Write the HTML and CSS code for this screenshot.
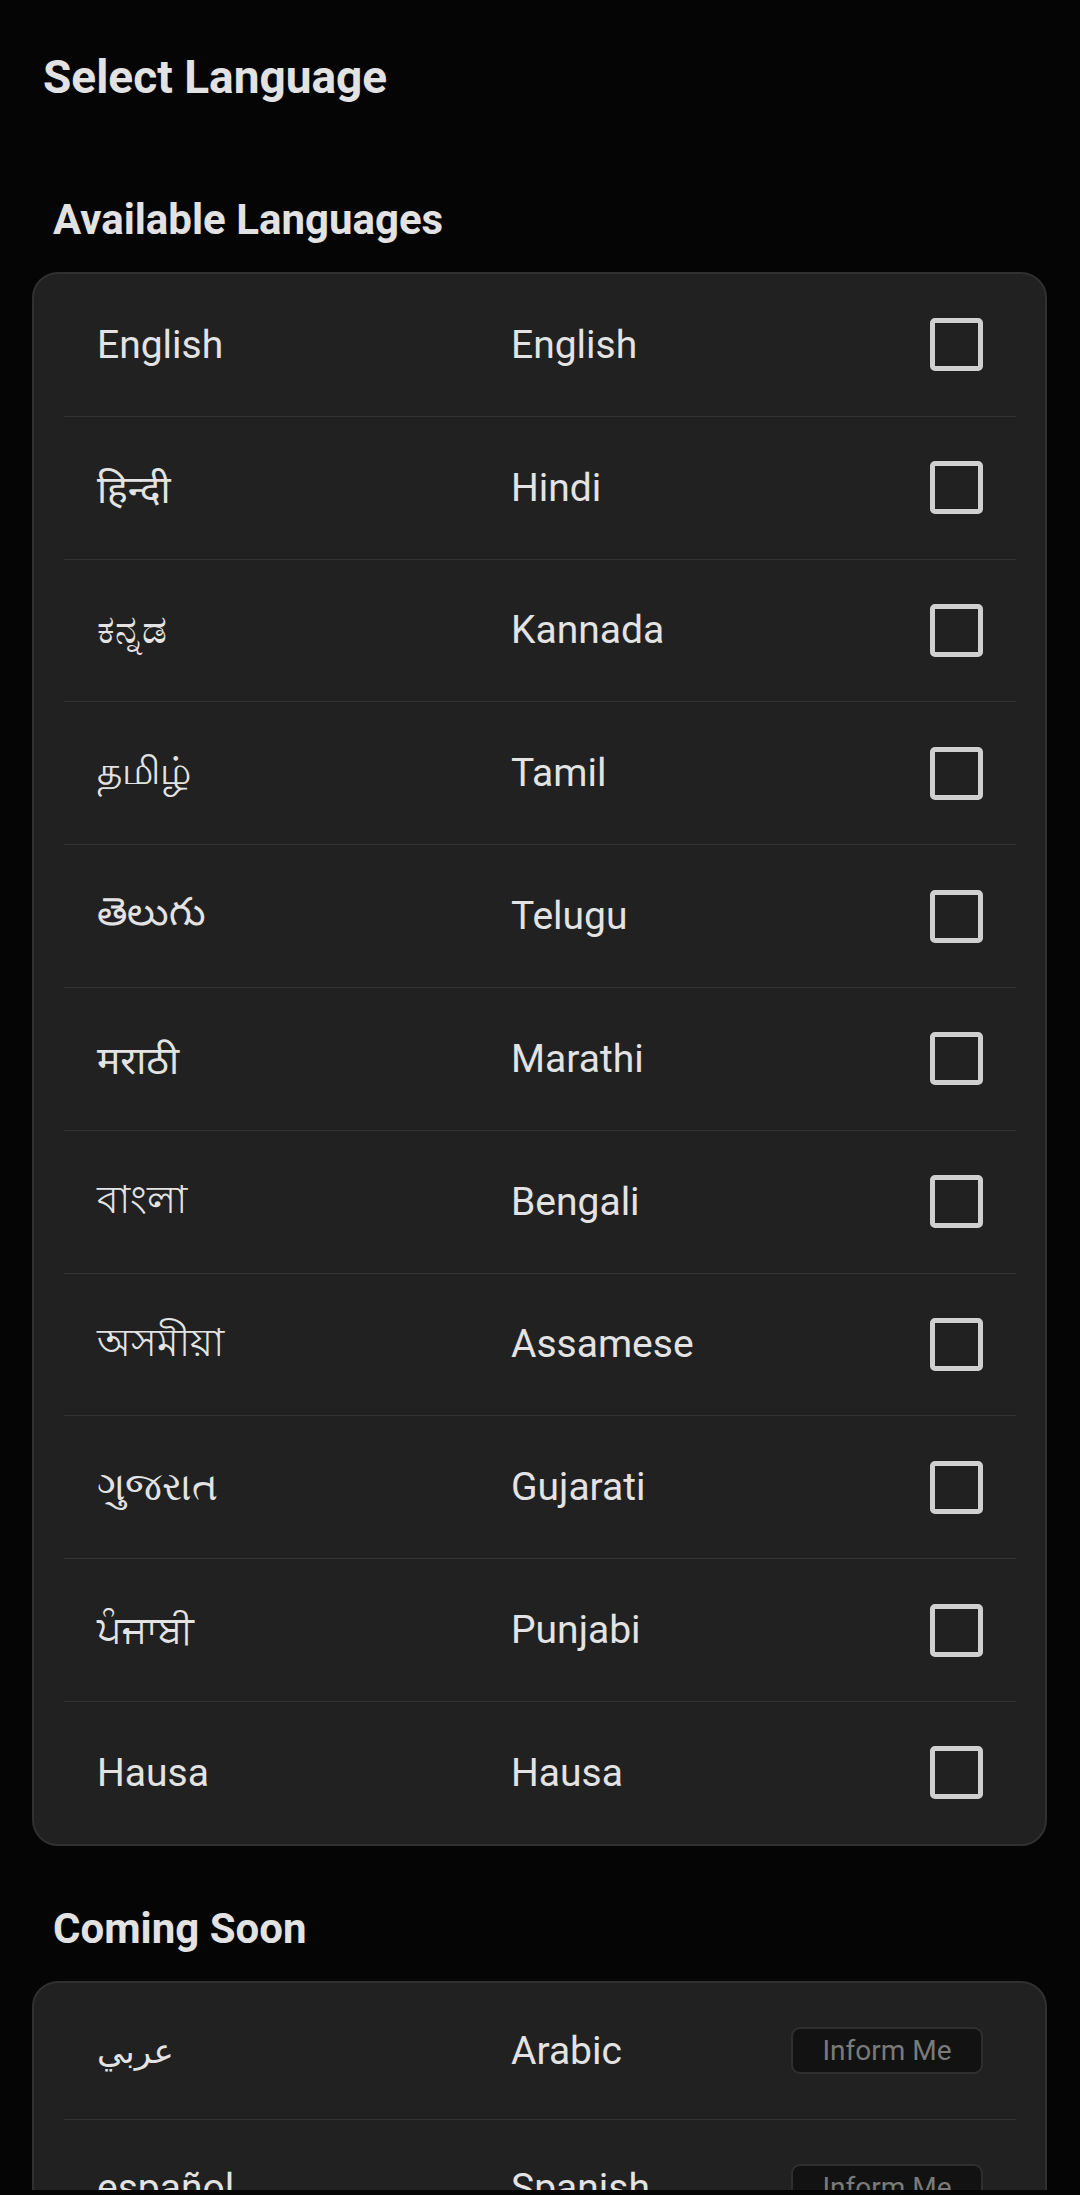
FILE: index.html
```html
<!DOCTYPE html>
<html lang="en">
<head>
    <meta charset="UTF-8">
    <meta name="viewport" content="width=device-width, initial-scale=1.0">
    <title>Select Language</title>
    <link rel="stylesheet" href="styles.css">
</head>
<body>

    <div class="screen">
        <h1 class="page-title">Select Language</h1>

        <h2 class="section-title">Available Languages</h2>
        <div class="card">
            <div class="lang-row">
                <span class="native">English</span>
                <span class="name">English</span>
                <span class="checkbox"></span>
            </div>
            <div class="lang-row">
                <span class="native">हिन्दी</span>
                <span class="name">Hindi</span>
                <span class="checkbox"></span>
            </div>
            <div class="lang-row">
                <span class="native">ಕನ್ನಡ</span>
                <span class="name">Kannada</span>
                <span class="checkbox"></span>
            </div>
            <div class="lang-row">
                <span class="native">தமிழ்</span>
                <span class="name">Tamil</span>
                <span class="checkbox"></span>
            </div>
            <div class="lang-row">
                <span class="native">తెలుగు</span>
                <span class="name">Telugu</span>
                <span class="checkbox"></span>
            </div>
            <div class="lang-row">
                <span class="native">मराठी</span>
                <span class="name">Marathi</span>
                <span class="checkbox"></span>
            </div>
            <div class="lang-row">
                <span class="native">বাংলা</span>
                <span class="name">Bengali</span>
                <span class="checkbox"></span>
            </div>
            <div class="lang-row">
                <span class="native">অসমীয়া</span>
                <span class="name">Assamese</span>
                <span class="checkbox"></span>
            </div>
            <div class="lang-row">
                <span class="native">ગુજરાત</span>
                <span class="name">Gujarati</span>
                <span class="checkbox"></span>
            </div>
            <div class="lang-row">
                <span class="native">ਪੰਜਾਬੀ</span>
                <span class="name">Punjabi</span>
                <span class="checkbox"></span>
            </div>
            <div class="lang-row">
                <span class="native">Hausa</span>
                <span class="name">Hausa</span>
                <span class="checkbox"></span>
            </div>
        </div>

        <h2 class="section-title soon-title">Coming Soon</h2>
        <div class="card">
            <div class="lang-row soon-row">
                <span class="native native-ar">عربي</span>
                <span class="name">Arabic</span>
                <button class="inform-btn">Inform Me</button>
            </div>
            <div class="lang-row soon-row">
                <span class="native">español</span>
                <span class="name">Spanish</span>
                <button class="inform-btn">Inform Me</button>
            </div>
            <div class="lang-row soon-row">
                <span class="native">français</span>
                <span class="name">French</span>
                <button class="inform-btn">Inform Me</button>
            </div>
        </div>
    </div>

</body>
</html>
```

FILE: styles.css
```css
body {
    margin: 0;
    background-color: #050505;
    font-family: Roboto, "Noto Sans", "DejaVu Sans", sans-serif;
    color: #e3e3e3;
}
.screen {
    height: 2190px;
    overflow: hidden;
}
.page-title {
    margin: 0;
    padding: 49px 0 0 43px;
    font-size: 46px;
    font-weight: 700;
    line-height: 56px;
    color: #e2e2e2;
}
.section-title {
    margin: 90px 0 27px 53px;
    font-size: 42px;
    font-weight: 700;
    line-height: 50px;
    color: #e2e2e2;
}
.soon-title {
    margin-top: 58px;
}
.card {
    margin: 0 33px 0 32px;
    padding: 0 29px 0 30px;
    background: #212121;
    border: 2px solid #303030;
    border-radius: 26px;
}
.lang-row {
    display: grid;
    grid-template-columns: 414px 1fr auto;
    align-items: center;
    height: 141.8px;
    padding: 0 33px;
    border-top: 1px solid #333333;
    font-size: 39px;
}
.lang-row:first-child {
    border-top: none;
}
.soon-row {
    height: 136px;
}
.native-ar {
    font-size: 34px;
}
.checkbox {
    width: 43px;
    height: 43px;
    border: 5px solid #d0d0d0;
    border-radius: 5px;
}
.inform-btn {
    width: 192px;
    height: 47px;
    padding: 0;
    background: #121212;
    border: 2px solid #2f2f2f;
    border-radius: 9px;
    font-family: Roboto, "Noto Sans", sans-serif;
    font-size: 28px;
    color: #7a7a7a;
}
```
